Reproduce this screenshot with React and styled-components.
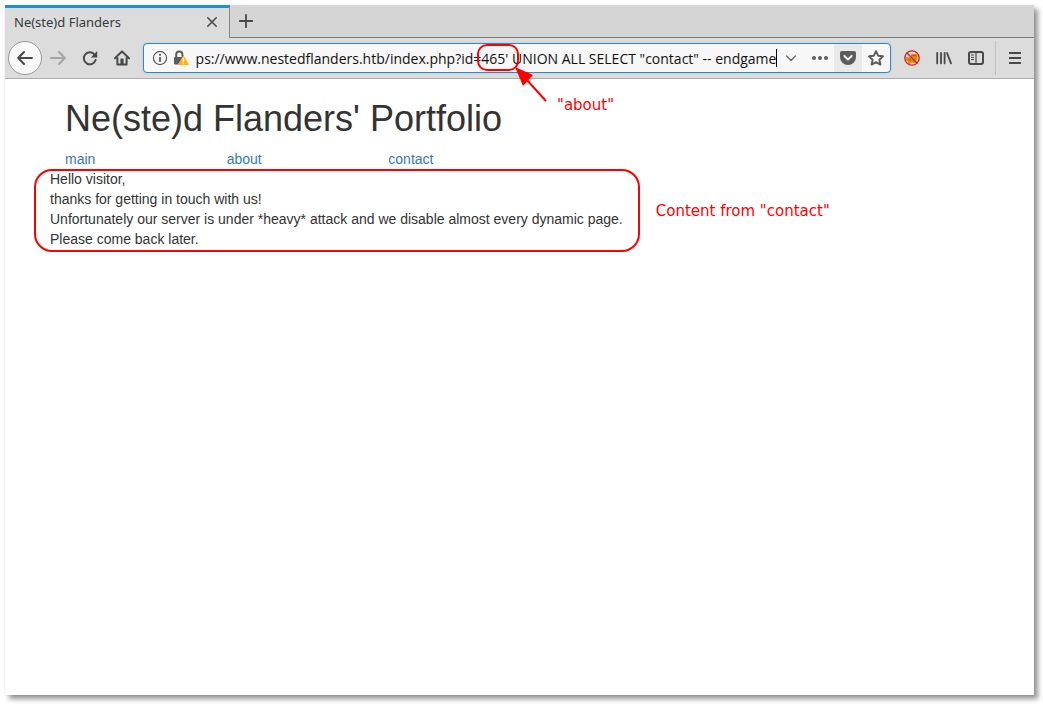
import React, { useLayoutEffect, useRef } from "react";
import styled, { createGlobalStyle } from "styled-components";

const GlobalStyle = createGlobalStyle`
  * { box-sizing: border-box; }
  body { margin: 0; background: #fff; }
`;

const BrowserWindow = styled.div`
  position: relative;
  display: flex;
  flex-direction: column;
  min-height: calc(100vh - 14px);
  background: #fff;
  box-shadow: 4px 4px 5px rgba(0, 0, 0, 0.42), 0 0 1px rgba(0, 0, 0, 0.15);
`;

const Desktop = styled.div`
  padding: 5px 9px 9px 5px;
`;

const TabBar = styled.div`
  display: flex;
  height: 33px;
  background: #d5d5d5;
`;

const Tab = styled.div`
  display: flex;
  align-items: center;
  justify-content: space-between;
  width: 225px;
  padding: 0 8px 2px 9px;
  background: #dcdcdc;
  border-top: 3px solid #208fd0;
  border-right: 1px solid #858585;
  font: 13px/20px "Noto Sans", sans-serif;
  color: #363b3e;
`;

const TabRest = styled.div`
  display: flex;
  align-items: center;
  flex: 1;
  border-bottom: 1px solid #7c7c7c;
`;

const IconButton = styled.button`
  display: flex;
  align-items: center;
  justify-content: center;
  flex: none;
  width: ${(p) => p.$width || 32}px;
  height: ${(p) => p.$height || 28}px;
  padding: 0;
  border: 0;
  background: ${(p) => p.$background || "transparent"};
  color: ${(p) => p.$color || "#47494a"};
`;

const BackButton = styled(IconButton)`
  width: 34px;
  height: 34px;
  border: 1px solid #999;
  border-radius: 50%;
  background: #f9f9f9;
`;

const Toolbar = styled.div`
  display: flex;
  align-items: center;
  height: 41px;
  padding: 0 3px;
  background: #dcdcdc;
  border-bottom: 1px solid #adadad;
`;

const AddressBar = styled.form`
  display: flex;
  align-items: center;
  flex: 1;
  min-width: 0;
  height: 30px;
  margin: 0 5px;
  padding-left: 5px;
  border: 1px solid #208fd0;
  border-radius: 4px;
  background: #f7f7f7;
  box-shadow: 0 0 2px rgba(0, 0, 0, 0.15);
  overflow: hidden;
`;

const AddressInput = styled.input`
  flex: 1;
  min-width: 0;
  height: 24px;
  margin-left: 5px;
  padding: 0;
  border: 0;
  outline: 0;
  background: transparent;
  color: #111;
  font: 14px/20px "Open Sans", sans-serif;
`;

const Caret = styled.span`
  width: 1px;
  height: 18px;
  background: #000;
`;

const Divider = styled.span`
  width: 1px;
  height: 34px;
  margin: 0 3px;
  background: #c2c2c2;
`;

const Page = styled.main`
  padding: 20px 14px 20px 45px;
  color: #333;
  font: 14px/20px "Liberation Sans", Arial, sans-serif;
`;

const Title = styled.h1`
  margin: 0 0 10px 15px;
  font-size: 36px;
  line-height: 40px;
  font-weight: 400;
`;

const Nav = styled.nav`
  display: grid;
  grid-template-columns: repeat(6, 1fr);
`;

const NavItem = styled.div`
  padding: 0 15px;
`;

const NavLink = styled.a`
  color: #337ab7;
  text-decoration: none;
`;

const Message = styled.div`
  position: relative;
  width: fit-content;
  padding-right: 12px;
`;

const Line = styled.p`
  margin: 0;
`;

const Note = styled.span`
  position: absolute;
  color: #f00;
  white-space: nowrap;
  font: 15px/20px "DejaVu Sans", sans-serif;
`;

const MessageNote = styled(Note)`
  top: 32px;
  left: calc(100% + 21px);
`;

const MessageOutline = styled.span`
  position: absolute;
  inset: 0 -5px -3px -16px;
  border: 2px solid #f00;
  border-radius: 18px;
`;

const ParameterOutline = styled.span`
  position: absolute;
  top: 39px;
  left: 472px;
  width: 42px;
  height: 27px;
  border: 2px solid #f00;
  border-radius: 10px;
`;

const Arrow = styled.svg`
  position: absolute;
  top: 61px;
  left: 509px;
`;

const ParameterNote = styled(Note)`
  top: 90px;
  left: 552px;
`;

const Icon = ({ size = 16, children }) => (
  <svg
    width={size}
    height={size}
    viewBox="0 0 16 16"
    fill="none"
    stroke="currentColor"
    strokeWidth="2"
    strokeLinecap="round"
    strokeLinejoin="round"
    aria-hidden="true"
  >
    {children}
  </svg>
);

const ADDRESS =
  "https://www.nestedflanders.htb/index.php?id=465' UNION ALL SELECT \"contact\" -- endgame";

export default function App() {
  const address = useRef(null);

  useLayoutEffect(() => {
    const showEnd = () => {
      if (address.current) address.current.scrollLeft = address.current.scrollWidth;
    };
    showEnd();
    document.fonts.ready.then(showEnd);
    window.addEventListener("resize", showEnd);
    return () => window.removeEventListener("resize", showEnd);
  }, []);

  return (
    <Desktop>
      <GlobalStyle />
      <BrowserWindow>
        <TabBar>
          <Tab>
            <span>Ne(ste)d Flanders</span>
            <IconButton type="button" aria-label="Close tab" $width={18}>
              <Icon>
                <path d="M3.8 3.8l8.4 8.4M12.2 3.8l-8.4 8.4" strokeWidth="1.6" />
              </Icon>
            </IconButton>
          </Tab>
          <TabRest>
            <IconButton type="button" aria-label="New tab">
              <Icon>
                <path d="M8 1.8v12.4M1.8 8h12.4" strokeWidth="1.8" />
              </Icon>
            </IconButton>
          </TabRest>
        </TabBar>

        <Toolbar>
          <BackButton type="button" aria-label="Back">
            <Icon>
              <path d="M15 8H1.4M7 2L1.2 8 7 14" />
            </Icon>
          </BackButton>
          <IconButton type="button" aria-label="Forward" $color="#a4a4a4">
            <Icon>
              <path d="M1 8h13.6M9 2l5.8 6L9 14" />
            </Icon>
          </IconButton>
          <IconButton type="button" aria-label="Reload">
            <Icon>
              <path d="M12.6 4.6A6 6 0 1 0 13.6 10" />
              <path d="M15.2 1v6.4H8.8z" fill="currentColor" stroke="none" />
            </Icon>
          </IconButton>
          <IconButton type="button" aria-label="Home">
            <Icon>
              <path d="M1 8.2L8 1.4l7 6.8M3.4 8v6.4h9.2V8" />
              <path d="M6.4 14V8.6h3.2V14z" fill="currentColor" stroke="none" />
            </Icon>
          </IconButton>

          <AddressBar onSubmit={(e) => e.preventDefault()}>
            <IconButton type="button" aria-label="Site information" $width={22} $color="#5c5c5c">
              <Icon>
                <circle cx="8" cy="8" r="6.6" strokeWidth="1.2" />
                <path d="M8 7.6v3.6" strokeWidth="1.8" />
                <circle cx="8" cy="4.8" r="1.1" fill="currentColor" stroke="none" />
              </Icon>
            </IconButton>
            <IconButton type="button" aria-label="Connection security" $width={20} $color="#5c5c5c">
              <Icon>
                <path d="M3.2 8V4.6a3.1 3.1 0 0 1 6.2 0V6" />
                <rect x="1" y="7" width="9" height="7.6" rx="1" fill="currentColor" stroke="none" />
                <path d="M10.4 6.6L15 14.4H5.8z" fill="#ffb30f" stroke="#ffb30f" strokeWidth="1.4" />
                <path d="M10.4 8.4v3" stroke="#fff" strokeWidth="1.4" />
                <circle cx="10.4" cy="13.4" r="0.8" fill="#fff" stroke="none" />
              </Icon>
            </IconButton>
            <AddressInput ref={address} aria-label="Address" defaultValue={ADDRESS} spellCheck={false} />
            <Caret />
            <IconButton type="button" aria-label="Show history" $width={28} $color="#6a6a6a">
              <Icon>
                <path d="M3.6 6l4.4 4.6L12.4 6" strokeWidth="1.4" />
              </Icon>
            </IconButton>
            <IconButton type="button" aria-label="Page actions" $width={29} $color="#5c5c5c">
              <Icon>
                <g fill="currentColor" stroke="none">
                  <circle cx="2" cy="8" r="2" />
                  <circle cx="8" cy="8" r="2" />
                  <circle cx="14" cy="8" r="2" />
                </g>
              </Icon>
            </IconButton>
            <IconButton type="button" aria-label="Save to Pocket" $width={28} $background="#e9e9e9" $color="#5c5c5c">
              <Icon>
                <path
                  d="M2 1h12a2 2 0 0 1 2 2v4a8 8 0 0 1-16 0V3a2 2 0 0 1 2-2z"
                  fill="currentColor"
                  stroke="none"
                />
                <path d="M4.4 6L8 9.4 11.6 6" stroke="#f4f4f4" />
              </Icon>
            </IconButton>
            <IconButton type="button" aria-label="Bookmark" $width={28} $color="#5c5c5c">
              <Icon>
                <path d="M8 1.2l2.1 4.5 4.9.6-3.6 3.4 1 4.9L8 12.2l-4.4 2.4 1-4.9L1 6.3l4.9-.6z" strokeWidth="1.9" />
              </Icon>
            </IconButton>
          </AddressBar>

          <IconButton type="button" aria-label="Extension disabled">
            <Icon>
              <g stroke="none">
                <path d="M1.6 6.6l3.2 1L6.6 6l1.2-2.6 2 .8 2.6-1 1.4 2.2-.4 3.2-1.6 2.4 1 1.4-2.4.8-2.6-.8-1.8 1.6-2.6-.6.6-2L2 10.6z" fill="#e8830c" />
                <path d="M9 5.4l2.6.4M4.6 9.4l2 .8" stroke="#a65a08" strokeWidth="1" />
              </g>
              <g stroke="#d41d1d" strokeWidth="1.3">
                <circle cx="8" cy="8" r="7.2" />
                <path d="M3 3l10 10" />
              </g>
            </Icon>
          </IconButton>
          <IconButton type="button" aria-label="Library">
            <Icon>
              <path d="M1.2 2.8v10.6M5 2.8v10.6M8.6 2.8v10.6M11 3l4 10.4" strokeWidth="1.8" />
            </Icon>
          </IconButton>
          <IconButton type="button" aria-label="Sidebars">
            <Icon>
              <rect x="1" y="2" width="14" height="12" rx="2" />
              <path d="M8 2v12" strokeWidth="1.2" />
              <path d="M3.4 5h2.2M3.4 7.4h2.2M3.4 9.6h2.2" strokeWidth="1" />
            </Icon>
          </IconButton>
          <Divider />
          <IconButton type="button" aria-label="Menu">
            <Icon>
              <path d="M2 3h12M2 8h12M2 13h12" strokeLinecap="butt" />
            </Icon>
          </IconButton>
        </Toolbar>

        <Page>
          <Title>Ne(ste)d Flanders' Portfolio</Title>
          <Nav>
            {["main", "about", "contact"].map((name) => (
              <NavItem key={name}>
                <NavLink href={`#${name}`}>{name}</NavLink>
              </NavItem>
            ))}
          </Nav>
          <Message>
            <Line>Hello visitor,</Line>
            <Line>thanks for getting in touch with us!</Line>
            <Line>Unfortunately our server is under *heavy* attack and we disable almost every dynamic page.</Line>
            <Line>Please come back later.</Line>
            <MessageOutline />
            <MessageNote>Content from "contact"</MessageNote>
          </Message>
        </Page>

        <ParameterOutline />
        <Arrow width="36" height="38" aria-hidden="true">
          <path d="M32 35L12 13" stroke="#f00" strokeWidth="2" />
          <path d="M1 1l18 8-10 11z" fill="#f00" />
        </Arrow>
        <ParameterNote>"about"</ParameterNote>
      </BrowserWindow>
    </Desktop>
  );
}
